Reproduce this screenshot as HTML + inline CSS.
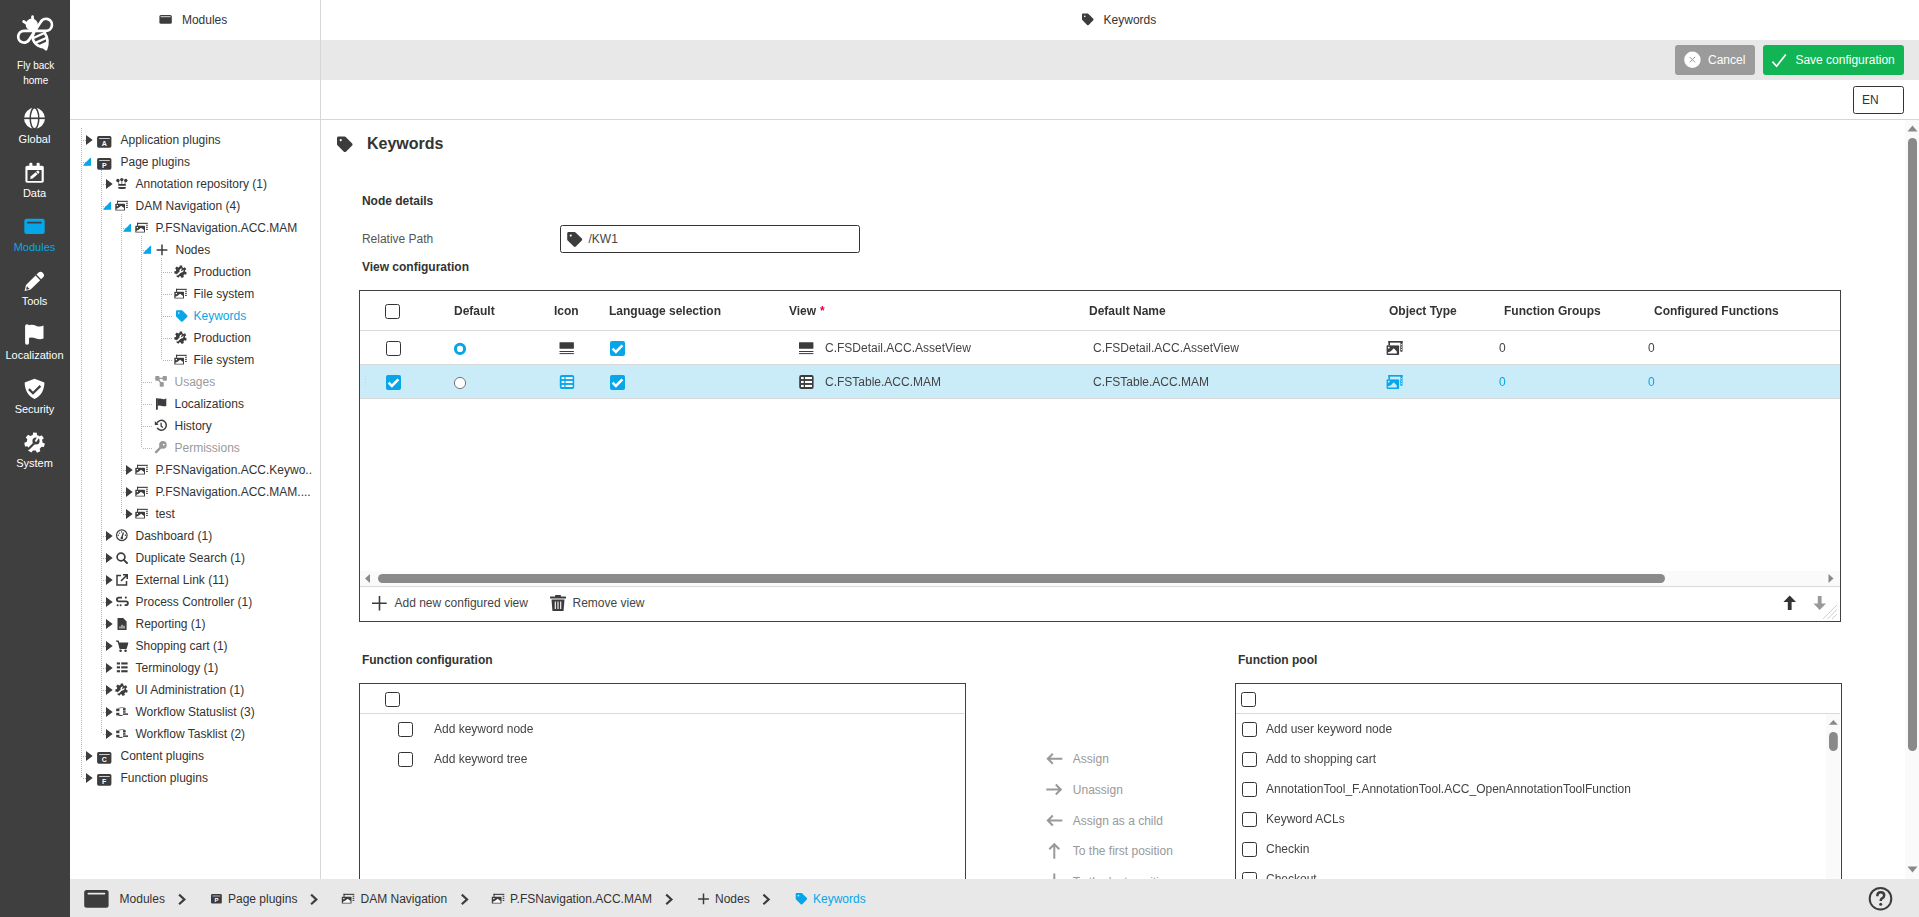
<!DOCTYPE html><html><head><meta charset="utf-8"><style>
html,body{margin:0;padding:0;width:1919px;height:917px;overflow:hidden;background:#fff;font-family:"Liberation Sans",sans-serif;}
.t{position:absolute;white-space:nowrap;}
.g{will-change:transform}
svg{display:block}
</style></head><body>
<div style="position:absolute;left:0px;top:0px;width:70px;height:917px;background:#3f3f3f"></div>
<div style="position:absolute;left:70px;top:40px;width:1849px;height:40px;background:#e8e8e8"></div>
<div style="position:absolute;left:70px;top:119px;width:1849px;height:1px;background:#d6d6d6"></div>
<div style="position:absolute;left:320px;top:0px;width:1px;height:879px;background:#d6d6d6"></div>
<div style="position:absolute;left:70px;top:879px;width:1849px;height:38px;background:#e8e8e8"></div>
<div style="position:absolute;left:1905px;top:120px;width:14px;height:759px;background:#fafafa"></div>
<div style="position:absolute;left:1908px;top:138px;width:9px;height:613px;background:#898989;border-radius:5px"></div>
<svg style="position:absolute;left:1907px;top:125px" width="11" height="7" viewBox="0 0 11 7"><path d="M0.5 6.5 L5.5 0.5 L10.5 6.5Z" fill="#898989"/></svg>
<svg style="position:absolute;left:1907px;top:866px" width="11" height="7" viewBox="0 0 11 7"><path d="M0.5 0.5 L5.5 6.5 L10.5 0.5Z" fill="#898989"/></svg>
<svg style="position:absolute;left:0;top:0" width="1919" height="917"><g transform="translate(14,12)" fill="none" stroke="#fff" stroke-width="2.7" stroke-linecap="round" stroke-linejoin="round">
<circle cx="17.8" cy="12.7" r="6.1" fill="#fff" stroke="none"/>
<path d="M18.5 4.6 L18.7 7.6 M9.6 9.5 L12.2 11.2"/>
<path d="M21 18.8 H32 A6 6 0 1 0 26.7 10 L21 18.8"/>
<path d="M21 18.8 H10 A5.9 5.9 0 1 0 15.3 27.5 L21 18.8"/>
<path d="M19.5 21.5 C17 27 20.5 34 30 35.5 L32 37.2 C33.5 33 34.5 26 30.8 21.2" />
<path d="M18.8 26.3 L31 20.7 M21.3 30.9 L32.8 25.7" stroke-width="2.3"/>
<path d="M23 33.9 L33.7 29 L33.8 33 L32.4 37 L27 35.6Z" fill="#fff" stroke="none"/>
</g><g><circle cx="34.5" cy="118.3" r="10.5" fill="#fff"/>
<path d="M24 118.3 H45" stroke="#3f3f3f" stroke-width="1.7"/>
<ellipse cx="34.5" cy="118.3" rx="4.3" ry="10.5" fill="none" stroke="#3f3f3f" stroke-width="1.5"/></g><g><rect x="25.4" y="165.8" width="18.4" height="17" rx="1.8" fill="#fff"/>
<rect x="27.5" y="170" width="14.1" height="11" fill="#3f3f3f"/>
<rect x="29.3" y="162.8" width="3.1" height="4" rx="1.2" fill="#fff"/><rect x="36.6" y="162.8" width="3.1" height="4" rx="1.2" fill="#fff"/>
</g><g transform="translate(30.1,178.9) rotate(-41)"><path d="M0 0 L2.2 -1.45 H8.6 V1.45 H2.2Z" fill="#fff"/><path d="M9.3 -1.45 H10.4 A1.45 1.45 0 0 1 10.4 1.45 H9.3Z" fill="#fff"/></g><g><rect x="24.3" y="218.8" width="20.4" height="15.2" rx="2.2" fill="#07a6e8"/>
<rect x="27" y="221.8" width="14.8" height="1.7" rx=".8" fill="#3f3f3f"/></g><g transform="translate(24.6,290.9) rotate(-44.5)">
<path d="M0 0 L5.2 -3.3 H18.6 V3.3 H5.2 Z" fill="#fff"/>
<path d="M1.9 0.2 L4.9 -1.7 V2.1 Z" fill="#3f3f3f"/>
<path d="M19.9 -3.3 H22.4 A3.3 3.3 0 0 1 22.4 3.3 H19.9 Z" fill="#fff"/></g><g fill="#fff"><rect x="25.1" y="324.3" width="3.9" height="20.4" rx="1.9"/>
<path d="M28 325.5 C31 324.2 34 324.8 36.5 326 C39 327 41.5 326.5 43.5 325.5 V338.5 C41 339.5 38.5 339.5 36 338.5 C33.5 337.3 30.5 337 28 338.2 Z"/></g><g><path d="M34.5 378.8 L44.4 382.5 C44.4 390 41 396 34.5 399 C28 396 24.7 390 24.7 382.5 Z" fill="#fff"/>
<path d="M28.9 389.1 L33 393.2 L40.4 385.9" fill="none" stroke="#3f3f3f" stroke-width="2.3"/></g><g transform="rotate(15 34.6 442.7)"><path d="M42.31 440.57 L44.73 440.86 L44.73 444.54 L42.31 444.83 L41.07 447.40 L42.36 449.48 L39.48 451.77 L37.74 450.06 L34.96 450.69 L34.14 452.99 L30.55 452.17 L30.81 449.74 L28.58 447.96 L26.27 448.75 L24.67 445.44 L26.73 444.13 L26.73 441.27 L24.67 439.96 L26.27 436.65 L28.58 437.44 L30.81 435.66 L30.55 433.23 L34.14 432.41 L34.96 434.71 L37.74 435.34 L39.48 433.63 L42.36 435.92 L41.07 438.00Z" fill="#fff"/></g><path d="M29 448.5 L34 443.5" stroke="#3f3f3f" stroke-width="2.2" stroke-linecap="round"/><circle cx="36" cy="441" r="3.6" fill="#3f3f3f"/><path d="M35.5 441.5 L39 436" stroke="#fff" stroke-width="2"/><g><rect x="159.4" y="15.1" width="12.4" height="8.7" rx="1.5" fill="#3c3c3c"/><rect x="160.6" y="16.2" width="10" height="1" fill="#ddd"/></g><g transform="translate(1082,13.6) scale(0.02266)"><path d="M0 252.118V48C0 21.49 21.49 0 48 0h204.118a48 48 0 0 1 33.941 14.059l211.882 211.882c18.745 18.745 18.745 49.137 0 67.882L293.823 497.941c-18.745 18.745-49.137 18.745-67.882 0L14.059 286.059A48 48 0 0 1 0 252.118z" fill="#3c3c3c"/><circle cx="122" cy="122" r="36" fill="#fff"/></g><rect x="1675" y="45" width="80" height="30" rx="3" fill="#9b9b9b"/><circle cx="1692.4" cy="59.7" r="8.2" fill="#fff"/><path d="M1689.6 56.9 L1695.1 62.4 M1695.1 56.9 L1689.6 62.4" stroke="#9b9b9b" stroke-width="1"/><rect x="1763" y="45" width="141" height="30" rx="3" fill="#12b553"/><path d="M1772.4 61.6 L1776.6 66.2 L1785.8 54.4" fill="none" stroke="#fff" stroke-width="1.7"/><rect x="1853.5" y="86.5" width="50" height="27" rx="2" fill="#fff" stroke="#333" stroke-width="1"/><path d="M81.5 128 V778" stroke="#b4b4b4" stroke-width="1" stroke-dasharray="1 1"/><path d="M101.5 170 V734" stroke="#b4b4b4" stroke-width="1" stroke-dasharray="1 1"/><path d="M121.5 214 V514" stroke="#b4b4b4" stroke-width="1" stroke-dasharray="1 1"/><path d="M141.5 236 V448" stroke="#b4b4b4" stroke-width="1" stroke-dasharray="1 1"/><path d="M161.5 258 V360" stroke="#b4b4b4" stroke-width="1" stroke-dasharray="1 1"/><path d="M83 140.5 H86" stroke="#b4b4b4" stroke-width="1" stroke-dasharray="1 1"/><path d="M86 134.95 L92.7 139.95 L86 144.95Z" fill="#3c3c3c"/><rect x="97.1" y="135.9" width="14.3" height="11.8" rx="1.6" fill="#3c3c3c"/><rect x="99.1" y="138.0" width="10.6" height="0.8" fill="#f0f0f0"/><text x="104.25" y="146.1" font-family="Liberation Sans" font-weight="bold" font-size="7" fill="#fff" text-anchor="middle">A</text><path d="M83 162.5 H86" stroke="#b4b4b4" stroke-width="1" stroke-dasharray="1 1"/><path d="M83.8 165.2 L90.5 165.2 L90.5 158.3Z" fill="#07a6e8" stroke="#07a6e8" stroke-width="1.1" stroke-linejoin="round"/><rect x="97.1" y="157.9" width="14.3" height="11.8" rx="1.6" fill="#3c3c3c"/><rect x="99.1" y="160.0" width="10.6" height="0.8" fill="#f0f0f0"/><text x="104.25" y="168.1" font-family="Liberation Sans" font-weight="bold" font-size="7" fill="#fff" text-anchor="middle">P</text><path d="M103 184.5 H106" stroke="#b4b4b4" stroke-width="1" stroke-dasharray="1 1"/><path d="M106 178.95 L112.7 183.95 L106 188.95Z" fill="#3c3c3c"/><g fill="#3c3c3c"><circle cx="117.9" cy="180.5" r="1.7"/><circle cx="121.8" cy="179.6" r="1.7"/><circle cx="125.8" cy="180.5" r="1.7"/><rect x="118.3" y="184" width="7.5" height="1.8"/><path d="M118.3 187 H125.8 V188.6 Q122 189.6 118.3 188.6Z"/></g><path d="M118.2 181.5 L119 184.2 M121.8 181 V184.2 M125.5 181.5 L124.8 184.2" stroke="#3c3c3c" stroke-width=".9" opacity=".75"/><path d="M103 206.5 H106" stroke="#b4b4b4" stroke-width="1" stroke-dasharray="1 1"/><path d="M103.8 209.2 L110.5 209.2 L110.5 202.3Z" fill="#07a6e8" stroke="#07a6e8" stroke-width="1.1" stroke-linejoin="round"/><g fill="#3c3c3c"><rect x="117" y="200.8" width="10.8" height="1.1"/><rect x="117" y="200.8" width="1.1" height="3"/><rect x="126.1" y="202.7" width="1.7" height="1.1"/><rect x="126.1" y="204.8" width="1.7" height="1.1"/><rect x="126.1" y="206.9" width="1.7" height="1.1"/><rect x="115.3" y="203.8" width="9.7" height="6.8" rx=".6"/></g><g fill="#fff"><path d="M116.4 209.7 V208.8 L118.6 207.8 L121.1 205.7 L124 208.1 V209.7Z"/><rect x="116.7" y="205" width="1.3" height="1.2"/></g><path d="M123 228.5 H126" stroke="#b4b4b4" stroke-width="1" stroke-dasharray="1 1"/><path d="M123.8 231.2 L130.5 231.2 L130.5 224.3Z" fill="#07a6e8" stroke="#07a6e8" stroke-width="1.1" stroke-linejoin="round"/><g fill="#3c3c3c"><rect x="137" y="222.8" width="10.8" height="1.1"/><rect x="137" y="222.8" width="1.1" height="3"/><rect x="146.1" y="224.7" width="1.7" height="1.1"/><rect x="146.1" y="226.8" width="1.7" height="1.1"/><rect x="146.1" y="228.9" width="1.7" height="1.1"/><rect x="135.3" y="225.8" width="9.7" height="6.8" rx=".6"/></g><g fill="#fff"><path d="M136.4 231.7 V230.8 L138.6 229.8 L141.1 227.7 L144 230.1 V231.7Z"/><rect x="136.7" y="227" width="1.3" height="1.2"/></g><path d="M143 250.5 H146" stroke="#b4b4b4" stroke-width="1" stroke-dasharray="1 1"/><path d="M143.8 253.2 L150.5 253.2 L150.5 246.3Z" fill="#07a6e8" stroke="#07a6e8" stroke-width="1.1" stroke-linejoin="round"/><path d="M162 244.5 V255.3 M156.6 249.9 H167.4" stroke="#3c3c3c" stroke-width="1.5"/><path d="M163 272.5 H173" stroke="#b4b4b4" stroke-width="1" stroke-dasharray="1 1"/><path d="M185.20 271.68 L186.76 272.40 L186.06 274.66 L184.37 274.37 L183.45 275.36 L183.86 277.03 L181.66 277.89 L180.82 276.39 L179.48 276.29 L178.42 277.65 L176.38 276.47 L177.03 274.87 L176.28 273.76 L174.55 273.78 L174.20 271.45 L175.86 270.97 L176.25 269.68 L175.16 268.35 L176.77 266.62 L178.18 267.61 L179.43 267.12 L179.79 265.44 L182.14 265.62 L182.25 267.34 L183.41 268.01 L184.95 267.24 L186.28 269.19 L185.00 270.35Z" fill="#3c3c3c"/><path d="M177.6 274.6 L180.6 271.6" stroke="#fff" stroke-width="1.5" stroke-linecap="round"/><circle cx="181.5" cy="270.6" r="2" fill="#fff"/><path d="M181.5 270.8 L183.2 268.2" stroke="#3c3c3c" stroke-width="1.3"/><path d="M163 294.5 H173" stroke="#b4b4b4" stroke-width="1" stroke-dasharray="1 1"/><g fill="#3c3c3c"><rect x="176" y="288.8" width="10.8" height="1.1"/><rect x="176" y="288.8" width="1.1" height="3"/><rect x="185.1" y="290.7" width="1.7" height="1.1"/><rect x="185.1" y="292.8" width="1.7" height="1.1"/><rect x="185.1" y="294.9" width="1.7" height="1.1"/><rect x="174.3" y="291.8" width="9.7" height="6.8" rx=".6"/></g><g fill="#fff"><path d="M175.4 297.7 V296.8 L177.6 295.8 L180.1 293.7 L183 296.1 V297.7Z"/><rect x="175.7" y="293" width="1.3" height="1.2"/></g><path d="M163 316.5 H173" stroke="#b4b4b4" stroke-width="1" stroke-dasharray="1 1"/><g transform="translate(176,310.3) scale(0.02246)"><path d="M0 252.118V48C0 21.49 21.49 0 48 0h204.118a48 48 0 0 1 33.941 14.059l211.882 211.882c18.745 18.745 18.745 49.137 0 67.882L293.823 497.941c-18.745 18.745-49.137 18.745-67.882 0L14.059 286.059A48 48 0 0 1 0 252.118z" fill="#07a6e8"/><circle cx="122" cy="122" r="36" fill="#fff"/></g><path d="M163 338.5 H173" stroke="#b4b4b4" stroke-width="1" stroke-dasharray="1 1"/><path d="M185.20 337.68 L186.76 338.40 L186.06 340.66 L184.37 340.37 L183.45 341.36 L183.86 343.03 L181.66 343.89 L180.82 342.39 L179.48 342.29 L178.42 343.65 L176.38 342.47 L177.03 340.87 L176.28 339.76 L174.55 339.78 L174.20 337.45 L175.86 336.97 L176.25 335.68 L175.16 334.35 L176.77 332.62 L178.18 333.61 L179.43 333.12 L179.79 331.44 L182.14 331.62 L182.25 333.34 L183.41 334.01 L184.95 333.24 L186.28 335.19 L185.00 336.35Z" fill="#3c3c3c"/><path d="M177.6 340.6 L180.6 337.6" stroke="#fff" stroke-width="1.5" stroke-linecap="round"/><circle cx="181.5" cy="336.6" r="2" fill="#fff"/><path d="M181.5 336.8 L183.2 334.2" stroke="#3c3c3c" stroke-width="1.3"/><path d="M163 360.5 H173" stroke="#b4b4b4" stroke-width="1" stroke-dasharray="1 1"/><g fill="#3c3c3c"><rect x="176" y="354.8" width="10.8" height="1.1"/><rect x="176" y="354.8" width="1.1" height="3"/><rect x="185.1" y="356.7" width="1.7" height="1.1"/><rect x="185.1" y="358.8" width="1.7" height="1.1"/><rect x="185.1" y="360.9" width="1.7" height="1.1"/><rect x="174.3" y="357.8" width="9.7" height="6.8" rx=".6"/></g><g fill="#fff"><path d="M175.4 363.7 V362.8 L177.6 361.8 L180.1 359.7 L183 362.1 V363.7Z"/><rect x="175.7" y="359" width="1.3" height="1.2"/></g><path d="M143 382.5 H153" stroke="#b4b4b4" stroke-width="1" stroke-dasharray="1 1"/><g fill="#999"><rect x="155.2" y="376.1" width="4.3" height="4.6" rx=".9"/><rect x="162.6" y="376.1" width="4.3" height="4.6" rx=".9"/><rect x="159.7" y="382" width="4.1" height="4.7" rx=".9"/></g><path d="M158 378.4 H163 M158.2 379.6 L161.4 383.4" stroke="#999" stroke-width="1.4"/><path d="M143 404.5 H153" stroke="#b4b4b4" stroke-width="1" stroke-dasharray="1 1"/><g fill="#3c3c3c"><rect x="156" y="398" width="1.8" height="12" rx=".9"/><path d="M157.5 398.8 C160 398 162 399.5 164 399.2 C165 399 165.8 398.8 166.3 398.6 V406 C164 407 161.5 405.5 159.5 405.5 C158.6 405.5 158 405.8 157.5 406Z"/></g><path d="M143 426.5 H153" stroke="#b4b4b4" stroke-width="1" stroke-dasharray="1 1"/><path d="M156.8 423.6 A4.9 4.9 0 1 1 157.2 427.8" fill="none" stroke="#3c3c3c" stroke-width="1.5"/><path d="M154.8 421 V425 H158.6Z" fill="#3c3c3c"/><path d="M161.1 422.8 V425.9 L162.8 427.5" fill="none" stroke="#3c3c3c" stroke-width="1.3"/><path d="M143 448.5 H153" stroke="#b4b4b4" stroke-width="1" stroke-dasharray="1 1"/><circle cx="162.9" cy="444.9" r="3.8" fill="#999"/><circle cx="163.8" cy="444.7" r=".9" fill="#fff"/><path d="M161 447 L156.1 452.1" stroke="#999" stroke-width="2.5" stroke-linecap="round"/><path d="M123 470.5 H126" stroke="#b4b4b4" stroke-width="1" stroke-dasharray="1 1"/><path d="M126 464.95 L132.7 469.95 L126 474.95Z" fill="#3c3c3c"/><g fill="#3c3c3c"><rect x="137" y="464.8" width="10.8" height="1.1"/><rect x="137" y="464.8" width="1.1" height="3"/><rect x="146.1" y="466.7" width="1.7" height="1.1"/><rect x="146.1" y="468.8" width="1.7" height="1.1"/><rect x="146.1" y="470.9" width="1.7" height="1.1"/><rect x="135.3" y="467.8" width="9.7" height="6.8" rx=".6"/></g><g fill="#fff"><path d="M136.4 473.7 V472.8 L138.6 471.8 L141.1 469.7 L144 472.1 V473.7Z"/><rect x="136.7" y="469" width="1.3" height="1.2"/></g><path d="M123 492.5 H126" stroke="#b4b4b4" stroke-width="1" stroke-dasharray="1 1"/><path d="M126 486.95 L132.7 491.95 L126 496.95Z" fill="#3c3c3c"/><g fill="#3c3c3c"><rect x="137" y="486.8" width="10.8" height="1.1"/><rect x="137" y="486.8" width="1.1" height="3"/><rect x="146.1" y="488.7" width="1.7" height="1.1"/><rect x="146.1" y="490.8" width="1.7" height="1.1"/><rect x="146.1" y="492.9" width="1.7" height="1.1"/><rect x="135.3" y="489.8" width="9.7" height="6.8" rx=".6"/></g><g fill="#fff"><path d="M136.4 495.7 V494.8 L138.6 493.8 L141.1 491.7 L144 494.1 V495.7Z"/><rect x="136.7" y="491" width="1.3" height="1.2"/></g><path d="M123 514.5 H126" stroke="#b4b4b4" stroke-width="1" stroke-dasharray="1 1"/><path d="M126 508.95 L132.7 513.95 L126 518.95Z" fill="#3c3c3c"/><g fill="#3c3c3c"><rect x="137" y="508.8" width="10.8" height="1.1"/><rect x="137" y="508.8" width="1.1" height="3"/><rect x="146.1" y="510.7" width="1.7" height="1.1"/><rect x="146.1" y="512.8" width="1.7" height="1.1"/><rect x="146.1" y="514.9" width="1.7" height="1.1"/><rect x="135.3" y="511.8" width="9.7" height="6.8" rx=".6"/></g><g fill="#fff"><path d="M136.4 517.7 V516.8 L138.6 515.8 L141.1 513.7 L144 516.1 V517.7Z"/><rect x="136.7" y="513" width="1.3" height="1.2"/></g><path d="M103 536.5 H106" stroke="#b4b4b4" stroke-width="1" stroke-dasharray="1 1"/><path d="M106 530.95 L112.7 535.95 L106 540.95Z" fill="#3c3c3c"/><circle cx="121.8" cy="535.25" r="5.3" fill="none" stroke="#3c3c3c" stroke-width="1.2"/><path d="M121.8 537.8 L123.3 533" stroke="#3c3c3c" stroke-width="1.3" stroke-linecap="round"/><circle cx="121.8" cy="537.9" r="1.25" fill="#3c3c3c"/><g fill="#3c3c3c"><circle cx="118.3" cy="535.25" r=".7"/><circle cx="119.5" cy="533.1" r=".7"/><circle cx="121.6" cy="531.9" r=".7"/><circle cx="125.4" cy="535.25" r=".7"/></g><path d="M103 558.5 H106" stroke="#b4b4b4" stroke-width="1" stroke-dasharray="1 1"/><path d="M106 552.95 L112.7 557.95 L106 562.95Z" fill="#3c3c3c"/><circle cx="121" cy="557" r="3.9" fill="none" stroke="#3c3c3c" stroke-width="1.7"/><path d="M123.8 559.8 L127 563" stroke="#3c3c3c" stroke-width="1.9" stroke-linecap="round"/><path d="M103 580.5 H106" stroke="#b4b4b4" stroke-width="1" stroke-dasharray="1 1"/><path d="M106 574.95 L112.7 579.95 L106 584.95Z" fill="#3c3c3c"/><path d="M121 575.5 H117 V585 H126.5 V581" fill="none" stroke="#3c3c3c" stroke-width="1.5"/><path d="M121 581 L126.5 575.5 M123 574.8 H127.2 V579" fill="none" stroke="#3c3c3c" stroke-width="1.6"/><path d="M103 602.5 H106" stroke="#b4b4b4" stroke-width="1" stroke-dasharray="1 1"/><path d="M106 596.95 L112.7 601.95 L106 606.95Z" fill="#3c3c3c"/><path d="M122 597.6 H118.8 A1.9 1.9 0 0 0 118.8 601.4 H126 A1.9 1.9 0 0 1 126 605.2 H124.6" fill="none" stroke="#3c3c3c" stroke-width="1.8"/><g fill="#3c3c3c"><circle cx="125.8" cy="597.6" r="1.05"/><circle cx="117.6" cy="605.2" r="1"/><circle cx="120.6" cy="605.2" r="1"/></g><path d="M103 624.5 H106" stroke="#b4b4b4" stroke-width="1" stroke-dasharray="1 1"/><path d="M106 618.95 L112.7 623.95 L106 628.95Z" fill="#3c3c3c"/><path d="M117.5 618 H123.2 L126.6 621.4 V629.5 Q126.6 630 126.1 630 H118 Q117.5 630 117.5 629.5Z" fill="#3c3c3c"/><path d="M120 628.5 V626.5 M122 628.5 V624.8 M124 628.5 V625.8" stroke="#fff" stroke-width="1"/><path d="M103 646.5 H106" stroke="#b4b4b4" stroke-width="1" stroke-dasharray="1 1"/><path d="M106 640.95 L112.7 645.95 L106 650.95Z" fill="#3c3c3c"/><path d="M116 641 H118.2 L120 648.3 H126.2 L127.7 643 H118.9" fill="#3c3c3c" stroke="#3c3c3c" stroke-width="1.2" stroke-linejoin="round"/><circle cx="120.6" cy="650.7" r="1.3" fill="#3c3c3c"/><circle cx="125.6" cy="650.7" r="1.3" fill="#3c3c3c"/><path d="M103 668.5 H106" stroke="#b4b4b4" stroke-width="1" stroke-dasharray="1 1"/><path d="M106 662.95 L112.7 667.95 L106 672.95Z" fill="#3c3c3c"/><g fill="#3c3c3c"><rect x="116.8" y="662.4" width="3.2" height="2.1"/><rect x="121.2" y="662.4" width="6.4" height="2.1"/><rect x="116.8" y="666.3" width="3.2" height="2.1"/><rect x="121.2" y="666.3" width="6.4" height="2.1"/><rect x="116.8" y="670.1999999999999" width="3.2" height="2.1"/><rect x="121.2" y="670.1999999999999" width="6.4" height="2.1"/></g><path d="M103 690.5 H106" stroke="#b4b4b4" stroke-width="1" stroke-dasharray="1 1"/><path d="M106 684.95 L112.7 689.95 L106 694.95Z" fill="#3c3c3c"/><path d="M126.20 689.68 L127.76 690.40 L127.06 692.66 L125.37 692.37 L124.45 693.36 L124.86 695.03 L122.66 695.89 L121.82 694.39 L120.48 694.29 L119.42 695.65 L117.38 694.47 L118.03 692.87 L117.28 691.76 L115.55 691.78 L115.20 689.45 L116.86 688.97 L117.25 687.68 L116.16 686.35 L117.77 684.62 L119.18 685.61 L120.43 685.12 L120.79 683.44 L123.14 683.62 L123.25 685.34 L124.41 686.01 L125.95 685.24 L127.28 687.19 L126.00 688.35Z" fill="#3c3c3c"/><path d="M118.6 692.6 L121.6 689.6" stroke="#fff" stroke-width="1.5" stroke-linecap="round"/><circle cx="122.5" cy="688.6" r="2" fill="#fff"/><path d="M122.5 688.8 L124.2 686.2" stroke="#3c3c3c" stroke-width="1.3"/><path d="M103 712.5 H106" stroke="#b4b4b4" stroke-width="1" stroke-dasharray="1 1"/><path d="M106 706.95 L112.7 711.95 L106 716.95Z" fill="#3c3c3c"/><g fill="#3c3c3c"><rect x="116.2" y="708.6" width="3.2" height="2.6"/><rect x="116.2" y="712.8" width="3.2" height="2.6"/><rect x="123" y="708.2" width="2.6" height="2.3"/><rect x="123" y="711.2" width="2.6" height="1.5"/><rect x="123" y="713.4" width="5" height="1.5"/><rect x="118.6" y="714.9" width="4" height="1"/></g><path d="M118.4 708.3 Q122 706.6 125.4 708.3" fill="none" stroke="#3c3c3c" stroke-width="1" opacity=".6"/><path d="M103 734.5 H106" stroke="#b4b4b4" stroke-width="1" stroke-dasharray="1 1"/><path d="M106 728.95 L112.7 733.95 L106 738.95Z" fill="#3c3c3c"/><g fill="#3c3c3c"><rect x="116.2" y="730.6" width="3.2" height="2.6"/><rect x="116.2" y="734.8" width="3.2" height="2.6"/><rect x="123" y="730.2" width="2.6" height="2.3"/><rect x="123" y="733.2" width="2.6" height="1.5"/><rect x="123" y="735.4" width="5" height="1.5"/><rect x="118.6" y="736.9" width="4" height="1"/></g><path d="M118.4 730.3 Q122 728.6 125.4 730.3" fill="none" stroke="#3c3c3c" stroke-width="1" opacity=".6"/><path d="M83 756.5 H86" stroke="#b4b4b4" stroke-width="1" stroke-dasharray="1 1"/><path d="M86 750.95 L92.7 755.95 L86 760.95Z" fill="#3c3c3c"/><rect x="97.1" y="751.9" width="14.3" height="11.8" rx="1.6" fill="#3c3c3c"/><rect x="99.1" y="754.0" width="10.6" height="0.8" fill="#f0f0f0"/><text x="104.25" y="762.1" font-family="Liberation Sans" font-weight="bold" font-size="7" fill="#fff" text-anchor="middle">C</text><path d="M83 778.5 H86" stroke="#b4b4b4" stroke-width="1" stroke-dasharray="1 1"/><path d="M86 772.95 L92.7 777.95 L86 782.95Z" fill="#3c3c3c"/><rect x="97.1" y="773.9" width="14.3" height="11.8" rx="1.6" fill="#3c3c3c"/><rect x="99.1" y="776.0" width="10.6" height="0.8" fill="#f0f0f0"/><text x="104.25" y="784.1" font-family="Liberation Sans" font-weight="bold" font-size="7" fill="#fff" text-anchor="middle">F</text><g transform="translate(337,136.5) scale(0.03047)"><path d="M0 252.118V48C0 21.49 21.49 0 48 0h204.118a48 48 0 0 1 33.941 14.059l211.882 211.882c18.745 18.745 18.745 49.137 0 67.882L293.823 497.941c-18.745 18.745-49.137 18.745-67.882 0L14.059 286.059A48 48 0 0 1 0 252.118z" fill="#3c3c3c"/><circle cx="122" cy="122" r="36" fill="#fff"/></g><rect x="560.5" y="225.5" width="299" height="27" rx="2" fill="#fff" stroke="#333" stroke-width="1"/><g transform="translate(567.2,232) scale(0.02930)"><path d="M0 252.118V48C0 21.49 21.49 0 48 0h204.118a48 48 0 0 1 33.941 14.059l211.882 211.882c18.745 18.745 18.745 49.137 0 67.882L293.823 497.941c-18.745 18.745-49.137 18.745-67.882 0L14.059 286.059A48 48 0 0 1 0 252.118z" fill="#3c3c3c"/><circle cx="122" cy="122" r="36" fill="#fff"/></g><rect x="359.5" y="290.5" width="1481" height="331" fill="none" stroke="#404040" stroke-width="1"/><rect x="360" y="330" width="1480" height="1" fill="#d9d9d9"/><rect x="360" y="364" width="1480" height="1" fill="#d9d9d9"/><rect x="360" y="365" width="1480" height="33" fill="#caebf8"/><rect x="360" y="398" width="1480" height="1" fill="#d9d9d9"/><rect x="385.5" y="304.5" width="14" height="14" rx="2" fill="#fff" stroke="#333" stroke-width="1"/><rect x="386.5" y="341.5" width="14" height="14" rx="2" fill="#fff" stroke="#333" stroke-width="1"/><circle cx="460" cy="348.9" r="4.6" fill="none" stroke="#07a6e8" stroke-width="3"/><g fill="#3c3c3c"><rect x="559.5" y="342.2" width="14.4" height="6.5" rx=".4"/><rect x="559.5" y="351" width="14.4" height="1"/><rect x="559.5" y="353.1" width="14.4" height="1"/></g><rect x="610" y="341" width="15" height="15" rx="2" fill="#07a6e8"/><path d="M612.6 348.6 L615.9 351.9 L622.4 345.3" fill="none" stroke="#fff" stroke-width="2.6"/><g fill="#3c3c3c"><rect x="799" y="342.2" width="14.4" height="6.5" rx=".4"/><rect x="799" y="351" width="14.4" height="1"/><rect x="799" y="353.1" width="14.4" height="1"/></g><g fill="#3c3c3c"><rect x="1388.4" y="341" width="14.1" height="1.8"/><rect x="1388.4" y="341" width="1.6" height="4.2"/><rect x="1400.3" y="341" width="2.2" height="10.7"/><rect x="1386.6000000000001" y="345.2" width="12.5" height="9.8" rx="1"/></g><g fill="#fff"><rect x="1401.0" y="344.2" width=".9" height="1.2"/><rect x="1401.0" y="346.6" width=".9" height="1.2"/><rect x="1401.0" y="349" width=".9" height="1.2"/><rect x="1390.0" y="342.8" width="10.3" height="2.4"/><path d="M1387.8 353.6 V352.4 L1390.8 351.2 L1393.8 348.2 L1396.8 351.4 V353.6Z"/><rect x="1387.9" y="346.8" width="1.7" height="1.7"/></g><path d="M365.5 376 V388" stroke="#d8d3b8" stroke-width="1" stroke-dasharray="1 2"/><rect x="386" y="375" width="15" height="15" rx="2" fill="#07a6e8"/><path d="M388.6 382.6 L391.9 385.9 L398.4 379.3" fill="none" stroke="#fff" stroke-width="2.6"/><circle cx="460" cy="383" r="5.6" fill="#fff" stroke="#777" stroke-width="1"/><rect x="559.8" y="375" width="14.4" height="14" rx="2" fill="#07a6e8"/><rect x="561.5999999999999" y="377.0" width="2.7" height="2.1" fill="#fff"/><rect x="565.5999999999999" y="377.0" width="7" height="2.1" fill="#fff"/><rect x="561.5999999999999" y="380.95" width="2.7" height="2.1" fill="#fff"/><rect x="565.5999999999999" y="380.95" width="7" height="2.1" fill="#fff"/><rect x="561.5999999999999" y="384.9" width="2.7" height="2.1" fill="#fff"/><rect x="565.5999999999999" y="384.9" width="7" height="2.1" fill="#fff"/><rect x="610" y="375" width="15" height="15" rx="2" fill="#07a6e8"/><path d="M612.6 382.6 L615.9 385.9 L622.4 379.3" fill="none" stroke="#fff" stroke-width="2.6"/><rect x="799.2" y="375" width="14.4" height="14" rx="2" fill="#3c3c3c"/><rect x="801.0" y="377.0" width="2.7" height="2.1" fill="#fff"/><rect x="805.0" y="377.0" width="7" height="2.1" fill="#fff"/><rect x="801.0" y="380.95" width="2.7" height="2.1" fill="#fff"/><rect x="805.0" y="380.95" width="7" height="2.1" fill="#fff"/><rect x="801.0" y="384.9" width="2.7" height="2.1" fill="#fff"/><rect x="805.0" y="384.9" width="7" height="2.1" fill="#fff"/><g fill="#07a6e8"><rect x="1388.4" y="375" width="14.1" height="1.8"/><rect x="1388.4" y="375" width="1.6" height="4.2"/><rect x="1400.3" y="375" width="2.2" height="10.7"/><rect x="1386.6000000000001" y="379.2" width="12.5" height="9.8" rx="1"/></g><g fill="#caebf8"><rect x="1401.0" y="378.2" width=".9" height="1.2"/><rect x="1401.0" y="380.6" width=".9" height="1.2"/><rect x="1401.0" y="383" width=".9" height="1.2"/><rect x="1390.0" y="376.8" width="10.3" height="2.4"/><path d="M1387.8 387.6 V386.4 L1390.8 385.2 L1393.8 382.2 L1396.8 385.4 V387.6Z"/><rect x="1387.9" y="380.8" width="1.7" height="1.7"/></g><rect x="360" y="571" width="1480" height="15" fill="#fafafa"/><path d="M370 574 L365 578.5 L370 583Z" fill="#898989"/><rect x="378" y="574" width="1287" height="9" rx="4.5" fill="#898989"/><path d="M1828.5 574 L1833.5 578.5 L1828.5 583Z" fill="#898989"/><rect x="360" y="586" width="1480" height="1" fill="#d9d9d9"/><path d="M379.5 596 V610.5 M372 603.3 H386.7" stroke="#3c3c3c" stroke-width="1.6"/><g fill="#3c3c3c"><rect x="550" y="596.6" width="16" height="2" rx=".5"/><rect x="555" y="595" width="6" height="2" rx=".8"/><path d="M551.5 599.5 H564.5 L563.6 610.5 Q563.5 611 563 611 H553 Q552.5 611 552.4 610.5Z"/></g><path d="M555.3 601.5 V609 M558 601.5 V609 M560.7 601.5 V609" stroke="#fff" stroke-width="1.1"/><path d="M1789.7 595.5 L1783.4 602 H1787.8 V610 H1791.6 V602 H1796 Z" fill="#333"/><path d="M1819.7 610 L1813.5 603.5 H1817.8 V596 H1821.6 V603.5 H1826 Z" fill="#999"/><path d="M1823 619 L1837 605 M1827.5 619 L1837 609.5 M1832 619 L1837 614" stroke="#d0d0d0" stroke-width="1"/><rect x="359.5" y="683.5" width="606" height="240" fill="none" stroke="#404040" stroke-width="1"/><rect x="360" y="713" width="604" height="1" fill="#d9d9d9"/><rect x="385.5" y="692.5" width="14" height="14" rx="2" fill="#fff" stroke="#333" stroke-width="1"/><rect x="398.5" y="722.5" width="14" height="14" rx="2" fill="#fff" stroke="#333" stroke-width="1"/><rect x="398.5" y="752.5" width="14" height="14" rx="2" fill="#fff" stroke="#333" stroke-width="1"/><path d="M1062.3 758.7 H1047.8 M1052.8 753.7 L1047.8 758.7 L1052.8 763.7" fill="none" stroke="#999" stroke-width="2"/><path d="M1046.3 789.5 H1060.8 M1055.8 784.5 L1060.8 789.5 L1055.8 794.5" fill="none" stroke="#999" stroke-width="2"/><path d="M1062.3 820.5 H1047.8 M1052.8 815.5 L1047.8 820.5 L1052.8 825.5" fill="none" stroke="#999" stroke-width="2"/><path d="M1054.3 858.7 V844.2 M1049.3 849.2 L1054.3 844.2 L1059.3 849.2" fill="none" stroke="#999" stroke-width="2"/><path d="M1054.3 873.5 V888.0 M1049.3 883.0 L1054.3 888.0 L1059.3 883.0" fill="none" stroke="#999" stroke-width="2"/><rect x="1235.5" y="683.5" width="606" height="240" fill="none" stroke="#404040" stroke-width="1"/><rect x="1236" y="713" width="604" height="1" fill="#d9d9d9"/><rect x="1241.5" y="692.5" width="14" height="14" rx="2" fill="#fff" stroke="#333" stroke-width="1"/><rect x="1242.5" y="722.5" width="14" height="14" rx="2" fill="#fff" stroke="#333" stroke-width="1"/><rect x="1242.5" y="752.5" width="14" height="14" rx="2" fill="#fff" stroke="#333" stroke-width="1"/><rect x="1242.5" y="782.5" width="14" height="14" rx="2" fill="#fff" stroke="#333" stroke-width="1"/><rect x="1242.5" y="812.5" width="14" height="14" rx="2" fill="#fff" stroke="#333" stroke-width="1"/><rect x="1242.5" y="842.5" width="14" height="14" rx="2" fill="#fff" stroke="#333" stroke-width="1"/><rect x="1242.5" y="872.5" width="14" height="14" rx="2" fill="#fff" stroke="#333" stroke-width="1"/><rect x="1826" y="714" width="14" height="170" fill="#fafafa"/><path d="M1828.9 724.8 L1833.4 720 L1837.8 724.8Z" fill="#898989"/><rect x="1829" y="732" width="8.8" height="19" rx="4.4" fill="#898989"/></svg><div class="t" style="left:0.7px;top:55.53px;font-size:10px;line-height:20px;color:#fff;font-weight:normal;width:70px;text-align:center">Fly back</div>
<div class="t" style="left:0.7px;top:71.03px;font-size:10px;line-height:20px;color:#fff;font-weight:normal;width:70px;text-align:center">home</div>
<div class="t" style="left:-0.5px;top:129.19px;font-size:11px;line-height:20px;color:#fff;font-weight:normal;width:70px;text-align:center">Global</div>
<div class="t" style="left:-0.5px;top:183.19px;font-size:11px;line-height:20px;color:#fff;font-weight:normal;width:70px;text-align:center">Data</div>
<div class="t" style="left:-0.5px;top:237.19px;font-size:11px;line-height:20px;color:#07a6e8;font-weight:normal;width:70px;text-align:center">Modules</div>
<div class="t" style="left:-0.5px;top:291.19px;font-size:11px;line-height:20px;color:#fff;font-weight:normal;width:70px;text-align:center">Tools</div>
<div class="t" style="left:-0.5px;top:345.19px;font-size:11px;line-height:20px;color:#fff;font-weight:normal;width:70px;text-align:center">Localization</div>
<div class="t" style="left:-0.5px;top:399.19px;font-size:11px;line-height:20px;color:#fff;font-weight:normal;width:70px;text-align:center">Security</div>
<div class="t" style="left:-0.5px;top:453.19px;font-size:11px;line-height:20px;color:#fff;font-weight:normal;width:70px;text-align:center">System</div>
<div class="t" style="left:181.9px;top:9.64px;font-size:12px;line-height:20px;color:#333;font-weight:normal;">Modules</div>
<div class="t" style="left:1103.6px;top:9.64px;font-size:12px;line-height:20px;color:#333;font-weight:normal;">Keywords</div>
<div class="t" style="left:1708.0px;top:49.84px;font-size:12px;line-height:20px;color:#fff;font-weight:normal;">Cancel</div>
<div class="t" style="left:1795.4px;top:49.84px;font-size:12px;line-height:20px;color:#fff;font-weight:normal;">Save configuration</div>
<div class="t" style="left:1861.9px;top:89.64px;font-size:12px;line-height:20px;color:#333;font-weight:normal;">EN</div>
<div class="t" style="left:120.5px;top:130.14px;font-size:12px;line-height:20px;color:#333;font-weight:normal;">Application plugins</div>
<div class="t" style="left:120.5px;top:152.14px;font-size:12px;line-height:20px;color:#333;font-weight:normal;">Page plugins</div>
<div class="t" style="left:135.5px;top:174.14px;font-size:12px;line-height:20px;color:#333;font-weight:normal;">Annotation repository (1)</div>
<div class="t" style="left:135.5px;top:196.14px;font-size:12px;line-height:20px;color:#333;font-weight:normal;">DAM Navigation (4)</div>
<div class="t" style="left:155.5px;top:218.14px;font-size:12px;line-height:20px;color:#333;font-weight:normal;">P.FSNavigation.ACC.MAM</div>
<div class="t" style="left:175.5px;top:240.14px;font-size:12px;line-height:20px;color:#333;font-weight:normal;">Nodes</div>
<div class="t" style="left:193.5px;top:262.14px;font-size:12px;line-height:20px;color:#333;font-weight:normal;">Production</div>
<div class="t" style="left:193.5px;top:284.14px;font-size:12px;line-height:20px;color:#333;font-weight:normal;">File system</div>
<div class="t" style="left:193.5px;top:306.14px;font-size:12px;line-height:20px;color:#07a6e8;font-weight:normal;">Keywords</div>
<div class="t" style="left:193.5px;top:328.14px;font-size:12px;line-height:20px;color:#333;font-weight:normal;">Production</div>
<div class="t" style="left:193.5px;top:350.14px;font-size:12px;line-height:20px;color:#333;font-weight:normal;">File system</div>
<div class="t" style="left:174.5px;top:372.14px;font-size:12px;line-height:20px;color:#9a9a9a;font-weight:normal;">Usages</div>
<div class="t" style="left:174.5px;top:394.14px;font-size:12px;line-height:20px;color:#333;font-weight:normal;">Localizations</div>
<div class="t" style="left:174.5px;top:416.14px;font-size:12px;line-height:20px;color:#333;font-weight:normal;">History</div>
<div class="t" style="left:174.5px;top:438.14px;font-size:12px;line-height:20px;color:#9a9a9a;font-weight:normal;">Permissions</div>
<div class="t" style="left:155.5px;top:460.14px;font-size:12px;line-height:20px;color:#333;font-weight:normal;">P.FSNavigation.ACC.Keywo..</div>
<div class="t" style="left:155.5px;top:482.14px;font-size:12px;line-height:20px;color:#333;font-weight:normal;">P.FSNavigation.ACC.MAM....</div>
<div class="t" style="left:155.5px;top:504.14px;font-size:12px;line-height:20px;color:#333;font-weight:normal;">test</div>
<div class="t" style="left:135.5px;top:526.14px;font-size:12px;line-height:20px;color:#333;font-weight:normal;">Dashboard (1)</div>
<div class="t" style="left:135.5px;top:548.14px;font-size:12px;line-height:20px;color:#333;font-weight:normal;">Duplicate Search (1)</div>
<div class="t" style="left:135.5px;top:570.14px;font-size:12px;line-height:20px;color:#333;font-weight:normal;">External Link (11)</div>
<div class="t" style="left:135.5px;top:592.14px;font-size:12px;line-height:20px;color:#333;font-weight:normal;">Process Controller (1)</div>
<div class="t" style="left:135.5px;top:614.14px;font-size:12px;line-height:20px;color:#333;font-weight:normal;">Reporting (1)</div>
<div class="t" style="left:135.5px;top:636.14px;font-size:12px;line-height:20px;color:#333;font-weight:normal;">Shopping cart (1)</div>
<div class="t" style="left:135.5px;top:658.14px;font-size:12px;line-height:20px;color:#333;font-weight:normal;">Terminology (1)</div>
<div class="t" style="left:135.5px;top:680.14px;font-size:12px;line-height:20px;color:#333;font-weight:normal;">UI Administration (1)</div>
<div class="t" style="left:135.5px;top:702.14px;font-size:12px;line-height:20px;color:#333;font-weight:normal;">Workflow Statuslist (3)</div>
<div class="t" style="left:135.5px;top:724.14px;font-size:12px;line-height:20px;color:#333;font-weight:normal;">Workflow Tasklist (2)</div>
<div class="t" style="left:120.5px;top:746.14px;font-size:12px;line-height:20px;color:#333;font-weight:normal;">Content plugins</div>
<div class="t" style="left:120.5px;top:768.14px;font-size:12px;line-height:20px;color:#333;font-weight:normal;">Function plugins</div>
<div class="t" style="left:367.0px;top:134.06px;font-size:16px;line-height:20px;color:#333;font-weight:bold;">Keywords</div>
<div class="t" style="left:361.9px;top:190.84px;font-size:12px;line-height:20px;color:#333;font-weight:bold;">Node details</div>
<div class="t" style="left:361.9px;top:228.84px;font-size:12px;line-height:20px;color:#555;font-weight:normal;">Relative Path</div>
<div class="t" style="left:588.5px;top:228.84px;font-size:12px;line-height:20px;color:#444;font-weight:normal;">/KW1</div>
<div class="t" style="left:361.9px;top:256.94px;font-size:12px;line-height:20px;color:#333;font-weight:bold;">View configuration</div>
<div class="t" style="left:454.1px;top:300.94px;font-size:12px;line-height:20px;color:#333;font-weight:bold;will-change:transform">Default</div>
<div class="t" style="left:553.9px;top:300.94px;font-size:12px;line-height:20px;color:#333;font-weight:bold;will-change:transform">Icon</div>
<div class="t" style="left:608.8px;top:300.94px;font-size:12px;line-height:20px;color:#333;font-weight:bold;will-change:transform">Language selection</div>
<div class="t" style="left:788.9px;top:300.94px;font-size:12px;line-height:20px;color:#333;font-weight:bold;will-change:transform">View</div>
<div class="t" style="left:1088.9px;top:300.94px;font-size:12px;line-height:20px;color:#333;font-weight:bold;will-change:transform">Default Name</div>
<div class="t" style="left:1388.9px;top:300.94px;font-size:12px;line-height:20px;color:#333;font-weight:bold;will-change:transform">Object Type</div>
<div class="t" style="left:1503.9px;top:300.94px;font-size:12px;line-height:20px;color:#333;font-weight:bold;will-change:transform">Function Groups</div>
<div class="t" style="left:1653.5px;top:300.94px;font-size:12px;line-height:20px;color:#333;font-weight:bold;will-change:transform">Configured Functions</div>
<div class="t" style="left:820.0px;top:300.94px;font-size:12px;line-height:20px;color:#e2003a;font-weight:bold;will-change:transform">*</div>
<div class="t" style="left:824.5px;top:337.64px;font-size:12px;line-height:20px;color:#444;font-weight:normal;will-change:transform">C.FSDetail.ACC.AssetView</div>
<div class="t" style="left:1093.1px;top:337.64px;font-size:12px;line-height:20px;color:#444;font-weight:normal;will-change:transform">C.FSDetail.ACC.AssetView</div>
<div class="t" style="left:1498.9px;top:337.64px;font-size:12px;line-height:20px;color:#444;font-weight:normal;will-change:transform">0</div>
<div class="t" style="left:1647.9px;top:337.64px;font-size:12px;line-height:20px;color:#444;font-weight:normal;will-change:transform">0</div>
<div class="t" style="left:824.5px;top:371.64px;font-size:12px;line-height:20px;color:#444;font-weight:normal;will-change:transform">C.FSTable.ACC.MAM</div>
<div class="t" style="left:1093.1px;top:371.64px;font-size:12px;line-height:20px;color:#444;font-weight:normal;will-change:transform">C.FSTable.ACC.MAM</div>
<div class="t" style="left:1498.9px;top:371.64px;font-size:12px;line-height:20px;color:#07a6e8;font-weight:normal;will-change:transform">0</div>
<div class="t" style="left:1647.9px;top:371.64px;font-size:12px;line-height:20px;color:#07a6e8;font-weight:normal;will-change:transform">0</div>
<div class="t" style="left:394.5px;top:592.54px;font-size:12px;line-height:20px;color:#444;font-weight:normal;">Add new configured view</div>
<div class="t" style="left:572.5px;top:592.54px;font-size:12px;line-height:20px;color:#444;font-weight:normal;">Remove view</div>
<div class="t" style="left:361.9px;top:649.54px;font-size:12px;line-height:20px;color:#333;font-weight:bold;">Function configuration</div>
<div class="t" style="left:433.9px;top:718.84px;font-size:12px;line-height:20px;color:#444;font-weight:normal;will-change:transform">Add keyword node</div>
<div class="t" style="left:433.9px;top:748.84px;font-size:12px;line-height:20px;color:#444;font-weight:normal;will-change:transform">Add keyword tree</div>
<div class="t" style="left:1072.8px;top:749.04px;font-size:12px;line-height:20px;color:#999;font-weight:normal;">Assign</div>
<div class="t" style="left:1072.8px;top:779.84px;font-size:12px;line-height:20px;color:#999;font-weight:normal;">Unassign</div>
<div class="t" style="left:1072.8px;top:810.84px;font-size:12px;line-height:20px;color:#999;font-weight:normal;">Assign as a child</div>
<div class="t" style="left:1072.8px;top:841.04px;font-size:12px;line-height:20px;color:#999;font-weight:normal;">To the first position</div>
<div class="t" style="left:1072.8px;top:871.84px;font-size:12px;line-height:20px;color:#999;font-weight:normal;">To the last position</div>
<div class="t" style="left:1238.0px;top:649.54px;font-size:12px;line-height:20px;color:#333;font-weight:bold;">Function pool</div>
<div class="t" style="left:1265.7px;top:718.84px;font-size:12px;line-height:20px;color:#444;font-weight:normal;will-change:transform">Add user keyword node</div>
<div class="t" style="left:1265.7px;top:748.84px;font-size:12px;line-height:20px;color:#444;font-weight:normal;will-change:transform">Add to shopping cart</div>
<div class="t" style="left:1265.7px;top:778.84px;font-size:12px;line-height:20px;color:#444;font-weight:normal;will-change:transform">AnnotationTool_F.AnnotationTool.ACC_OpenAnnotationToolFunction</div>
<div class="t" style="left:1265.7px;top:808.84px;font-size:12px;line-height:20px;color:#444;font-weight:normal;will-change:transform">Keyword ACLs</div>
<div class="t" style="left:1265.7px;top:838.84px;font-size:12px;line-height:20px;color:#444;font-weight:normal;will-change:transform">Checkin</div>
<div class="t" style="left:1265.7px;top:868.84px;font-size:12px;line-height:20px;color:#444;font-weight:normal;will-change:transform">Checkout</div>
<div style="position:absolute;left:70px;top:879px;width:1849px;height:38px;background:#e8e8e8"></div>
<div class="t" style="left:119.6px;top:888.84px;font-size:12px;line-height:20px;color:#333;font-weight:normal;">Modules</div>
<div class="t" style="left:228.0px;top:888.84px;font-size:12px;line-height:20px;color:#333;font-weight:normal;">Page plugins</div>
<div class="t" style="left:360.5px;top:888.84px;font-size:12px;line-height:20px;color:#333;font-weight:normal;">DAM Navigation</div>
<div class="t" style="left:510.1px;top:888.84px;font-size:12px;line-height:20px;color:#333;font-weight:normal;">P.FSNavigation.ACC.MAM</div>
<div class="t" style="left:715.0px;top:888.84px;font-size:12px;line-height:20px;color:#333;font-weight:normal;">Nodes</div>
<div class="t" style="left:813.0px;top:888.84px;font-size:12px;line-height:20px;color:#07a6e8;font-weight:normal;">Keywords</div>
<svg style="position:absolute;left:0;top:0" width="1919" height="917"><rect x="84.2" y="890" width="24.4" height="17.7" rx="2.5" fill="#3c3c3c"/><rect x="87.5" y="892.8" width="17.8" height="1.7" rx=".8" fill="#e8e8e8"/><path d="M179.1 894.6 L184.4 899.4 L179.1 904.2" fill="none" stroke="#3c3c3c" stroke-width="2.1"/><rect x="211" y="894" width="10.8" height="9.6" rx="1.3" fill="#3c3c3c"/><rect x="212.5" y="895.6" width="7.8" height=".8" fill="#ccc"/><text x="216.4" y="902.4" font-family="Liberation Sans" font-weight="bold" font-size="6" fill="#fff" text-anchor="middle">P</text><path d="M311.1 894.6 L316.4 899.4 L311.1 904.2" fill="none" stroke="#3c3c3c" stroke-width="2.1"/><g fill="#3c3c3c"><rect x="343.5" y="893.8" width="10.8" height="1.1"/><rect x="343.5" y="893.8" width="1.1" height="3"/><rect x="352.6" y="895.7" width="1.7" height="1.1"/><rect x="352.6" y="897.8" width="1.7" height="1.1"/><rect x="352.6" y="899.9" width="1.7" height="1.1"/><rect x="341.8" y="896.8" width="9.7" height="6.8" rx=".6"/></g><g fill="#fff"><path d="M342.9 902.7 V901.8 L345.1 900.8 L347.6 898.7 L350.5 901.1 V902.7Z"/><rect x="343.2" y="898" width="1.3" height="1.2"/></g><path d="M461.8 894.6 L467.09999999999997 899.4 L461.8 904.2" fill="none" stroke="#3c3c3c" stroke-width="2.1"/><g fill="#3c3c3c"><rect x="493.5" y="893.8" width="10.8" height="1.1"/><rect x="493.5" y="893.8" width="1.1" height="3"/><rect x="502.6" y="895.7" width="1.7" height="1.1"/><rect x="502.6" y="897.8" width="1.7" height="1.1"/><rect x="502.6" y="899.9" width="1.7" height="1.1"/><rect x="491.8" y="896.8" width="9.7" height="6.8" rx=".6"/></g><g fill="#fff"><path d="M492.9 902.7 V901.8 L495.1 900.8 L497.6 898.7 L500.5 901.1 V902.7Z"/><rect x="493.2" y="898" width="1.3" height="1.2"/></g><path d="M666.2 894.6 L671.5 899.4 L666.2 904.2" fill="none" stroke="#3c3c3c" stroke-width="2.1"/><path d="M703.5 893.5 V904.3 M698.1 898.9 H708.9" stroke="#3c3c3c" stroke-width="1.5"/><path d="M763.4 894.6 L768.6999999999999 899.4 L763.4 904.2" fill="none" stroke="#3c3c3c" stroke-width="2.1"/><g transform="translate(795.7,893) scale(0.02246)"><path d="M0 252.118V48C0 21.49 21.49 0 48 0h204.118a48 48 0 0 1 33.941 14.059l211.882 211.882c18.745 18.745 18.745 49.137 0 67.882L293.823 497.941c-18.745 18.745-49.137 18.745-67.882 0L14.059 286.059A48 48 0 0 1 0 252.118z" fill="#07a6e8"/><circle cx="122" cy="122" r="36" fill="#fff"/></g><circle cx="1880.5" cy="898.7" r="10.8" fill="none" stroke="#3c3c3c" stroke-width="2"/><path d="M1877.3 896.2 Q1877.3 892.2 1880.7 892.2 Q1884.2 892.2 1884.2 895.3 Q1884.2 897.4 1882 898.4 Q1880.7 899.1 1880.7 901" fill="none" stroke="#3c3c3c" stroke-width="2.5"/><circle cx="1880.7" cy="904.3" r="1.5" fill="#3c3c3c"/></svg></body></html>
